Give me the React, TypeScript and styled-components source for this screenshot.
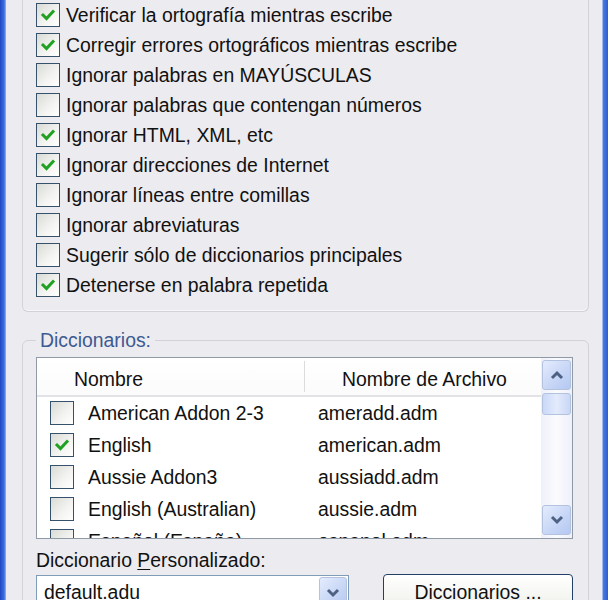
import styled, { createGlobalStyle } from 'styled-components'

const GlobalStyle = createGlobalStyle`
    html, body {
        margin: 0;
        padding: 0;
        overflow: hidden;
        background: #ecebef;
    }
    body {
        font-family: "Liberation Sans", Arial, sans-serif;
        font-size: 19.4px;
        color: #111;
    }
`

const options = [
    { label: 'Verificar la ortografía mientras escribe', checked: true },
    { label: 'Corregir errores ortográficos mientras escribe', checked: true },
    { label: 'Ignorar palabras en MAYÚSCULAS', checked: false },
    { label: 'Ignorar palabras que contengan números', checked: false },
    { label: 'Ignorar HTML, XML, etc', checked: true },
    { label: 'Ignorar direcciones de Internet', checked: true },
    { label: 'Ignorar líneas entre comillas', checked: false },
    { label: 'Ignorar abreviaturas', checked: false },
    { label: 'Sugerir sólo de diccionarios principales', checked: false },
    { label: 'Detenerse en palabra repetida', checked: true },
]

// the last row is only partly shown, the list scrolls
const dictionaries = [
    { name: 'American Addon 2-3', file: 'ameradd.adm', checked: false },
    { name: 'English', file: 'american.adm', checked: true },
    { name: 'Aussie Addon3', file: 'aussiadd.adm', checked: false },
    { name: 'English (Australian)', file: 'aussie.adm', checked: false },
    { name: 'Español (España)', file: 'espanol.adm', checked: false },
]

function CheckBox({ checked }: { checked: boolean }) {
    return (
        <Box>
            {checked && (
                <svg width="16" height="16" viewBox="0 0 16 16">
                    <path d="M3 8 L6.5 11.5 L13 4.5" fill="none" stroke="#21a121" strokeWidth="3" strokeLinecap="square" />
                </svg>
            )}
        </Box>
    )
}

function Chevron({ down }: { down?: boolean }) {
    return (
        <svg width="14" height="10" viewBox="0 0 14 10">
            <path d={down ? 'M2 2 L7 7 L12 2' : 'M2 8 L7 3 L12 8'} fill="none" stroke="#4d6185" strokeWidth="3" />
        </svg>
    )
}

function App() {
    return (
        <Window>
            <GlobalStyle />
            <Frame $side="left" />
            <Body>
                <OptionsGroup>
                    {options.map(o => (
                        <OptionRow key={o.label}>
                            <CheckBox checked={o.checked} />
                            <span>{o.label}</span>
                        </OptionRow>
                    ))}
                </OptionsGroup>
                <DictGroup>
                    <legend>Diccionarios:</legend>
                    <List>
                        <ListMain>
                            <Header>
                                <HeaderCell $width={268}>Nombre</HeaderCell>
                                <HeaderCell $width={235}>Nombre de Archivo</HeaderCell>
                            </Header>
                            {dictionaries.map(d => (
                                <ListRow key={d.file}>
                                    <NameCell>
                                        <CheckBox checked={d.checked} />
                                        <span>{d.name}</span>
                                    </NameCell>
                                    <FileCell>{d.file}</FileCell>
                                </ListRow>
                            ))}
                        </ListMain>
                        <ScrollBar>
                            <ScrollButton><Chevron /></ScrollButton>
                            <Thumb />
                            <Track />
                            <ScrollButton><Chevron down /></ScrollButton>
                        </ScrollBar>
                    </List>
                    <FieldLabel>Diccionario <u>P</u>ersonalizado:</FieldLabel>
                    <BottomRow>
                        <Combo>
                            <span>default.adu</span>
                            <ComboButton><Chevron down /></ComboButton>
                        </Combo>
                        <PushButton>Diccionarios ...</PushButton>
                    </BottomRow>
                </DictGroup>
            </Body>
            <Frame $side="right" />
        </Window>
    )
}

const Window = styled.div`
    display: flex;
    width: 608px;
    height: 600px;
    overflow: hidden;
    background: #ecebef;
`

const Frame = styled.div<{ $side: 'left' | 'right' }>`
    width: 6px;
    flex-shrink: 0;
    background: ${p => p.$side === 'left'
        ? 'linear-gradient(90deg, #1f48c4 0%, #3f6fe0 70%, #9cb6ec 100%)'
        : 'linear-gradient(90deg, #c9d8f4 0%, #4a78df 25%, #2d5bd3 100%)'};
`

const Body = styled.div`
    flex: 1;
    padding: 0 13px 0 16px;
    display: flex;
    flex-direction: column;
`

const OptionsGroup = styled.div`
    border: 1px solid #d3d2d8;
    border-top: none;
    border-radius: 0 0 6px 6px;
    padding: 0 0 11px 13px;
    box-shadow: inset 0 -1px 0 #f7f7f9;
`

const OptionRow = styled.div`
    height: 30px;
    display: flex;
    align-items: center;
    gap: 6px;
    white-space: nowrap;
`

const Box = styled.div`
    width: 22px;
    height: 22px;
    flex-shrink: 0;
    border: 1px solid #35526a;
    background: linear-gradient(135deg, #d9dbd6 0%, #f4f5f2 60%, #ffffff 100%);
    display: flex;
    align-items: center;
    justify-content: center;
`

const DictGroup = styled.fieldset`
    margin: 17px 0 0 0;
    padding: 6px 15px 0 13px;
    min-width: 0;
    border: 1px solid #d3d2d8;
    border-radius: 6px;

    legend {
        padding: 0 4px;
        line-height: 22px;
        color: #3d5a92;
    }
`

const List = styled.div`
    display: flex;
    height: 180px;
    border: 1px solid #8f9aa6;
    background: #fff;
    overflow: hidden;
`

const ListMain = styled.div`
    flex: 1;
    overflow: hidden;
`

const Header = styled.div`
    display: flex;
    height: 37px;
    border-bottom: 2px solid #e3e2e6;
    background: linear-gradient(#ffffff, #fbfbfb);
`

const HeaderCell = styled.div<{ $width: number }>`
    width: ${p => p.$width}px;
    box-sizing: border-box;
    display: flex;
    align-items: center;
    padding: 5px 0 0 37px;
    border-right: 1px solid #dcdcdc;
    margin: 3px 0;
    &:last-child {
        border-right: none;
    }
`

const ListRow = styled.div`
    display: flex;
    height: 32px;
    align-items: center;
    white-space: nowrap;
`

const NameCell = styled.div`
    width: 268px;
    box-sizing: border-box;
    padding-left: 13px;
    display: flex;
    align-items: center;
    gap: 14px;
`

const FileCell = styled.div`
    padding-left: 13px;
`

const ScrollBar = styled.div`
    width: 31px;
    display: flex;
    flex-direction: column;
    align-items: center;
    padding: 2px 0 3px;
    background: linear-gradient(90deg, #eef0fa, #fbfbfe 50%, #eef0fa);
`

const ScrollButton = styled.div`
    width: 27px;
    height: 28px;
    border: 1px solid #b3c2de;
    border-radius: 3px;
    background: linear-gradient(135deg, #e4ecfd 0%, #c6d5f6 60%, #b4c8f2 100%);
    display: flex;
    align-items: center;
    justify-content: center;
`

const Thumb = styled(ScrollButton)`
    margin-top: 3px;
    height: 20px;
    background: linear-gradient(90deg, #cad8f7 0%, #e3ebfc 50%, #c9d7f6 100%);
`

const Track = styled.div`
    flex: 1;
`

const FieldLabel = styled.div`
    margin-top: 9px;
    line-height: 24px;
    u {
        text-decoration-thickness: 1px;
        text-underline-offset: 2px;
    }
`

const BottomRow = styled.div`
    display: flex;
    justify-content: space-between;
    align-items: flex-start;
    margin-top: 3px;
`

const Combo = styled.div`
    width: 313px;
    height: 34px;
    box-sizing: border-box;
    border: 1px solid #7f9db9;
    background: #fff;
    display: flex;
    align-items: center;
    justify-content: space-between;
    padding: 1px 1px 1px 7px;

    span {
        line-height: 30px;
    }
`

const ComboButton = styled(ScrollButton)`
    align-self: flex-start;
    width: 26px;
    height: 30px;
`

const PushButton = styled.div`
    margin-top: -1px;
    width: 190px;
    height: 36px;
    box-sizing: border-box;
    border: 1px solid #243f66;
    border-radius: 4px;
    background: linear-gradient(#ffffff 0%, #f4f4f0 70%, #dcdcd6 100%);
    box-shadow: inset 0 -2px 0 #d6d0c5;
    display: flex;
    align-items: center;
    justify-content: center;
`

export default App
